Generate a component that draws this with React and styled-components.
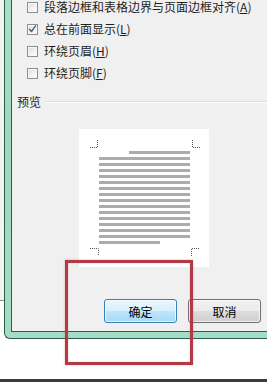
import React from "react";
import styled, { createGlobalStyle } from "styled-components";

const GlobalStyle = createGlobalStyle`
  html, body {
    margin: 0;
    padding: 0;
    background: #ffffff;
    overflow: hidden;
  }
  body {
    font-family: "Noto Sans CJK SC", "Liberation Sans", sans-serif;
  }
`;

const options = [
  { label: "段落边框和表格边界与页面边框对齐", key: "A", checked: false },
  { label: "总在前面显示", key: "L", checked: true },
  { label: "环绕页眉", key: "H", checked: false },
  { label: "环绕页脚", key: "F", checked: false },
];

const CheckMark = () => (
  <svg width="10" height="10" viewBox="0 0 10 10">
    <path
      d="M1.6 5.2 L3.9 7.8 L8.4 1.6"
      fill="none"
      stroke="#4a5d95"
      strokeWidth="1.6"
      strokeLinecap="round"
      strokeLinejoin="round"
    />
  </svg>
);

const PreviewPage = () => {
  const lines = Array.from({ length: 16 }, (_, i) => {
    const x1 = i === 0 ? 50 : 20;
    const x2 = i === 15 ? 81 : 111;
    return <rect key={i} x={x1} y={22 + i * 6} width={x2 - x1} height="3" fill="#acacac" />;
  });
  const mark = { fill: "none", stroke: "#555", strokeWidth: 1, strokeDasharray: "1 1" };
  return (
    <svg width="130" height="138" viewBox="0 0 130 138">
      <rect width="130" height="138" fill="#ffffff" />
      <path d="M11 18.5 H18.5 V11" {...mark} />
      <path d="M113.5 11 V18.5 H121" {...mark} />
      <path d="M11 119.5 H19.5 V127" {...mark} />
      <path d="M112.5 127 V119.5 H121" {...mark} />
      {lines}
    </svg>
  );
};

const App = () => (
  <>
    <GlobalStyle />
    <Screen>
      <Desktop>
        <LeftStrip />
        <Frame>
          <Dialog>
            <OptionList>
              {options.map((o) => (
                <OptionRow key={o.key}>
                  <Box>{o.checked && <CheckMark />}</Box>
                  <Label>
                    {o.label}(<u>{o.key}</u>)
                  </Label>
                </OptionRow>
              ))}
            </OptionList>
            <SectionHeader>
              <SectionTitle>预览</SectionTitle>
              <Rule />
            </SectionHeader>
            <PreviewArea>
              <PreviewPage />
            </PreviewArea>
            <ButtonRow>
              <Button $primary>确定</Button>
              <Button>取消</Button>
            </ButtonRow>
          </Dialog>
        </Frame>
      </Desktop>
      <Taskbar />
      <Highlight />
    </Screen>
  </>
);

const Screen = styled.div`
  position: relative;
  width: 267px;
  height: 382px;
  overflow: hidden;
  display: flex;
  flex-direction: column;
  background: #ffffff;
`;

const Desktop = styled.div`
  display: flex;
  height: 379px;
  align-items: flex-start;
`;

const LeftStrip = styled.div`
  width: 4px;
  height: 300px;
  background: #f3f3f3;
  border-bottom: 1px solid #8a8f92;
  flex-shrink: 0;
`;

const Frame = styled.div`
  flex: 1;
  background: linear-gradient(180deg, #a9dfc9 0%, #9ed8c0 40%, #a4dcc5 100%);
  border-left: 1px solid #2e5d4b;
  border-bottom: 1px solid #2e5d4b;
  border-bottom-left-radius: 6px;
  padding: 0 0 6px 6px;
`;

const Dialog = styled.div`
  height: 332px;
  box-sizing: border-box;
  background: #f0f0f0;
  border-left: 1px solid #2e5d4b;
  border-bottom: 1px solid #2e5d4b;
  display: flex;
  flex-direction: column;
  padding-bottom: 8px;
`;

const OptionList = styled.div`
  margin-top: -4px;
  padding-left: 15px;
  display: flex;
  flex-direction: column;
`;

const OptionRow = styled.div`
  height: 22px;
  display: flex;
  align-items: center;
  gap: 6px;
`;

const Box = styled.div`
  width: 11px;
  height: 11px;
  box-sizing: border-box;
  border: 1px solid #8f8f8f;
  background: linear-gradient(135deg, #dcdcdc 0%, #f4f4f4 60%, #ffffff 100%);
  box-shadow: inset 0 0 0 1px #f6f6f6;
  display: flex;
  align-items: center;
  justify-content: center;
`;

const Label = styled.span`
  font-size: 12px;
  line-height: 14px;
  color: #1e1e1e;
  white-space: nowrap;
`;

const SectionHeader = styled.div`
  margin-top: 10px;
  padding-left: 5px;
  display: flex;
  align-items: center;
  gap: 5px;
  height: 16px;
`;

const SectionTitle = styled.span`
  font-size: 12px;
  line-height: 16px;
  color: #1e1e1e;
`;

const Rule = styled.div`
  flex: 1;
  height: 1px;
  background: #d5dfe5;
  box-shadow: 0 1px 0 #ffffff;
  margin-top: -2px;
`;

const PreviewArea = styled.div`
  margin-top: 19px;
  padding-left: 67px;
  display: flex;
  line-height: 0;
`;

const ButtonRow = styled.div`
  margin-top: auto;
  display: flex;
  justify-content: flex-end;
  gap: 11px;
  padding-right: 6px;
`;

const Button = styled.button`
  width: 73px;
  height: 24px;
  box-sizing: border-box;
  padding: 0;
  font-family: "Noto Sans CJK SC", "Liberation Sans", sans-serif;
  font-size: 12px;
  color: #000;
  border-radius: 3px;
  border: 1px solid ${(p) => (p.$primary ? "#3c7fb1" : "#707070")};
  background: ${(p) =>
    p.$primary
      ? "linear-gradient(180deg, #eaf6fd 0%, #d9f0fc 48%, #bee6fd 52%, #a7d9f5 100%)"
      : "linear-gradient(180deg, #f2f2f2 0%, #ebebeb 48%, #dddddd 52%, #cfcfcf 100%)"};
  box-shadow: inset 0 0 0 1px rgba(255, 255, 255, 0.7);
`;

const Taskbar = styled.div`
  height: 3px;
  background: #3c3c3c;
`;

const Highlight = styled.div`
  position: absolute;
  left: 65px;
  top: 260px;
  width: 128px;
  height: 105px;
  box-sizing: border-box;
  border: 3px solid #b03a46;
  box-shadow: 0 0 2px rgba(210, 70, 80, 0.45), inset 0 0 2px rgba(210, 70, 80, 0.35);
`;

export default App;
